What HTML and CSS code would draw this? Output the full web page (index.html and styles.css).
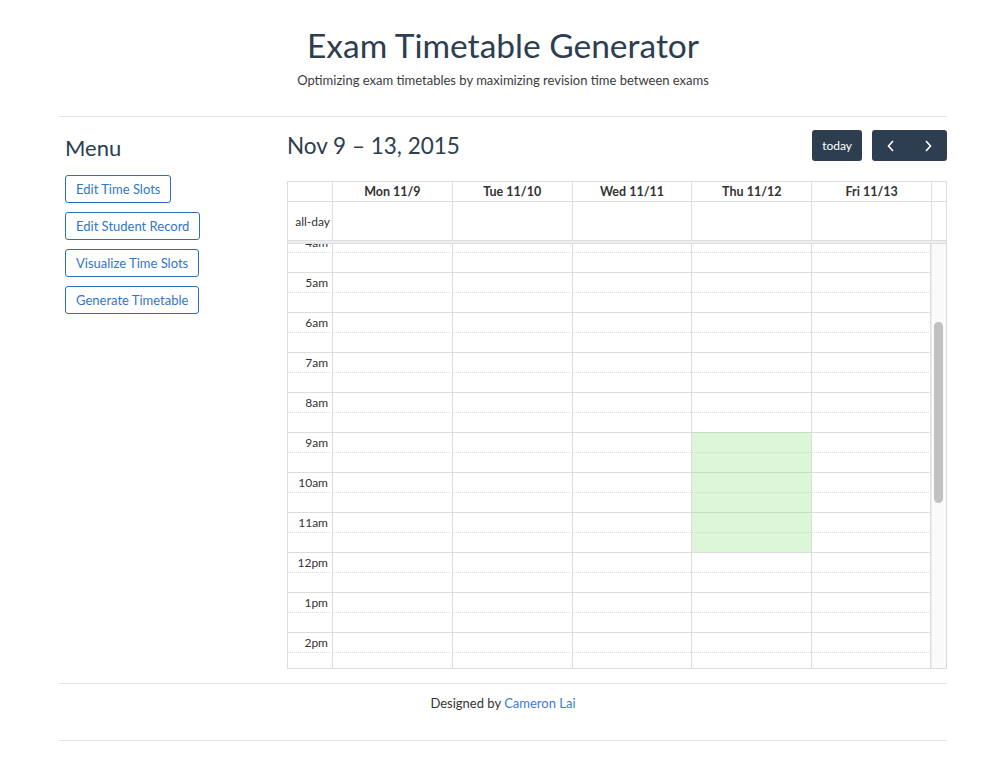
FILE: index.html
```html
<!DOCTYPE html>
<html lang="en">
<head>
    <meta charset="UTF-8">
    <title>Exam Timetable Generator</title>
    <link rel="stylesheet" href="styles.css">
</head>
<body>

<div class="page">
    <div class="header">
        <h1>Exam Timetable Generator</h1>
        <p class="subtitle">Optimizing exam timetables by maximizing revision time between exams</p>
    </div>
    <hr>

    <div class="main">
        <!-- Sidebar menu -->
        <div class="menu">
            <h3>Menu</h3>
            <a class="menu-btn" href="#">Edit Time Slots</a>
            <a class="menu-btn" href="#">Edit Student Record</a>
            <a class="menu-btn" href="#">Visualize Time Slots</a>
            <a class="menu-btn" href="#">Generate Timetable</a>
        </div>

        <!-- Calendar -->
        <div class="calendar">
            <div class="toolbar">
                <h2>Nov 9 – 13, 2015</h2>
                <div class="toolbar-btns">
                    <button class="btn">today</button>
                    <div class="btn-group">
                        <button class="btn btn-arrow">
                            <svg width="8" height="12" viewBox="0 0 8 12"><polyline points="6,1 1.5,6 6,11" fill="none" stroke="#fff" stroke-width="1.6"/></svg>
                        </button>
                        <button class="btn btn-arrow">
                            <svg width="8" height="12" viewBox="0 0 8 12"><polyline points="2,1 6.5,6 2,11" fill="none" stroke="#fff" stroke-width="1.6"/></svg>
                        </button>
                    </div>
                </div>
            </div>

            <div class="view">
                <div class="head-row">
                    <div class="axis"></div>
                    <div class="day-head">Mon 11/9</div>
                    <div class="day-head">Tue 11/10</div>
                    <div class="day-head">Wed 11/11</div>
                    <div class="day-head">Thu 11/12</div>
                    <div class="day-head">Fri 11/13</div>
                    <div class="gutter"></div>
                </div>
                <div class="allday-row">
                    <div class="axis allday-label">all-day</div>
                    <div class="day-cell"></div>
                    <div class="day-cell"></div>
                    <div class="day-cell"></div>
                    <div class="day-cell"></div>
                    <div class="day-cell"></div>
                    <div class="gutter"></div>
                </div>
                <div class="divider"></div>
                <div class="body-wrap">
                    <div class="scroller" id="scroller">
                        <div class="time-grid" id="timeGrid">
                            <div class="col-line" style="grid-column: 2"></div>
                            <div class="col-line" style="grid-column: 3"></div>
                            <div class="col-line" style="grid-column: 4"></div>
                            <div class="col-line" style="grid-column: 5"></div>
                            <div class="col-line last" style="grid-column: 6"></div>
                            <!-- Thu 9am - 12pm -->
                            <div class="bg-event" style="grid-column: 5; grid-row: 19 / span 6"></div>
                        </div>
                    </div>
                    <div class="scrollbar"><div class="thumb"></div></div>
                </div>
            </div>
        </div>
    </div>

    <hr>
    <div class="footer">Designed by <a href="#">Cameron Lai</a></div>
    <hr>
</div>

<script>
    const grid = document.getElementById('timeGrid');
    const firstLine = grid.firstElementChild;

    for (let i = 0; i < 48; i++) {
        const row = document.createElement('div');
        row.className = 'slot' + (i % 2 ? ' minor' : '');
        row.style.gridRow = (i + 1);
        if (i % 2 === 0) {
            const h = i / 2;
            let label = (h % 12 === 0 ? 12 : h % 12) + (h < 12 ? 'am' : 'pm');
            row.innerHTML = '<span class="time-label">' + label + '</span>';
        }
        grid.insertBefore(row, firstLine);
    }

    // start the view just above 4:30am
    document.getElementById('scroller').scrollTop = 172;
</script>

</body>
</html>
```

FILE: styles.css
```css
body {
    margin: 0;
    font-family: Lato, "Open Sans", sans-serif;
    color: #2c3e50;
    background: #fff;
}

.page {
    width: 888px;
    margin-left: 59px;
}

hr {
    border: none;
    border-top: 1px solid #e6e6e6;
    margin: 0;
}

.header {
    text-align: center;
    padding: 26px 0 27px;
}

.header h1 {
    font-size: 33.5px;
    font-weight: 400;
    line-height: 38px;
    margin: 0 0 7px;
}

.subtitle {
    font-size: 13px;
    line-height: 18px;
    color: #3b3b3b;
    margin: 0;
}

.main {
    display: flex;
    padding-top: 13px;
}

/* sidebar */

.menu {
    width: 228px;
    box-sizing: border-box;
    padding-left: 6px;
    display: flex;
    flex-direction: column;
    align-items: flex-start;
    gap: 9px;
}

.menu h3 {
    font-size: 22px;
    font-weight: 400;
    line-height: 26px;
    margin: 5px 0 5px;
}

.menu-btn {
    display: block;
    border: 1px solid #2f6ebd;
    border-radius: 3px;
    color: #3276c8;
    font-size: 13px;
    line-height: 26px;
    padding: 0 10px;
    text-decoration: none;
}

/* calendar */

.calendar {
    width: 660px;
}

.toolbar {
    display: flex;
    align-items: center;
    justify-content: space-between;
    margin-bottom: 20px;
}

.toolbar h2 {
    font-size: 22.5px;
    font-weight: 400;
    margin: 0;
}

.toolbar-btns {
    display: flex;
    gap: 10px;
}

.btn {
    background: #2c3e50;
    color: #fff;
    border: none;
    border-radius: 3px;
    font-family: inherit;
    font-size: 12px;
    height: 31px;
    padding: 0 10px;
}

.btn-group {
    display: flex;
}

.btn-arrow {
    width: 37.5px;
    padding: 0;
    display: flex;
    align-items: center;
    justify-content: center;
}

.btn-group .btn:first-child {
    border-radius: 3px 0 0 3px;
}

.btn-group .btn:last-child {
    border-radius: 0 3px 3px 0;
}

.view {
    border: 1px solid #ddd;
    font-size: 12px;
    color: #333;
}

.head-row,
.allday-row {
    display: grid;
    grid-template-columns: 44px repeat(5, 1fr) 15px;
}

.head-row {
    height: 20px;
    border-bottom: 1px solid #ddd;
    box-sizing: border-box;
}

.day-head {
    border-left: 1px solid #ddd;
    text-align: center;
    font-weight: 700;
    font-size: 12.5px;
    line-height: 19px;
}

.allday-row {
    height: 38px;
}

.day-cell,
.gutter {
    border-left: 1px solid #ddd;
}

.allday-label {
    display: flex;
    align-items: center;
    justify-content: flex-end;
    padding-right: 2px;
}

.divider {
    height: 2px;
    background: #eee;
    border-top: 1px solid #ddd;
    border-bottom: 1px solid #ddd;
}

.body-wrap {
    display: flex;
    height: 424px;
}

.scroller {
    flex: 1;
    overflow: hidden;
}

.scrollbar {
    width: 15px;
    background: #fafafa;
    border-left: 1px solid #ececec;
    box-sizing: border-box;
    padding: 0 3px 0 2px;
}

.thumb {
    height: 181px;
    margin-top: 78px;
    background: #c1c1c1;
    border-radius: 5px;
}

.time-grid {
    display: grid;
    grid-template-columns: 44px repeat(5, 1fr);
    grid-template-rows: repeat(48, 20px);
}

.slot {
    grid-column: 1 / -1;
    border-top: 1px solid #ddd;
    box-sizing: border-box;
}

.slot:first-child {
    border-top: none;
}

.slot.minor {
    border-top-style: dotted;
}

.time-label {
    display: block;
    width: 44px;
    box-sizing: border-box;
    padding-right: 4px;
    text-align: right;
    line-height: 19px;
}

.col-line {
    grid-row: 1 / -1;
    border-left: 1px solid #ddd;
}

.col-line.last {
    border-right: 1px solid #ddd;
}

.bg-event {
    background: #8fdf82;
    opacity: 0.3;
    margin-left: 1px;
}

/* footer */

.footer {
    text-align: center;
    font-size: 13px;
    line-height: 18px;
    color: #333;
    padding: 10px 0 28px;
}

.footer a {
    color: #3a7bd5;
    text-decoration: none;
}

.main + hr {
    margin-top: 14px;
}
```
